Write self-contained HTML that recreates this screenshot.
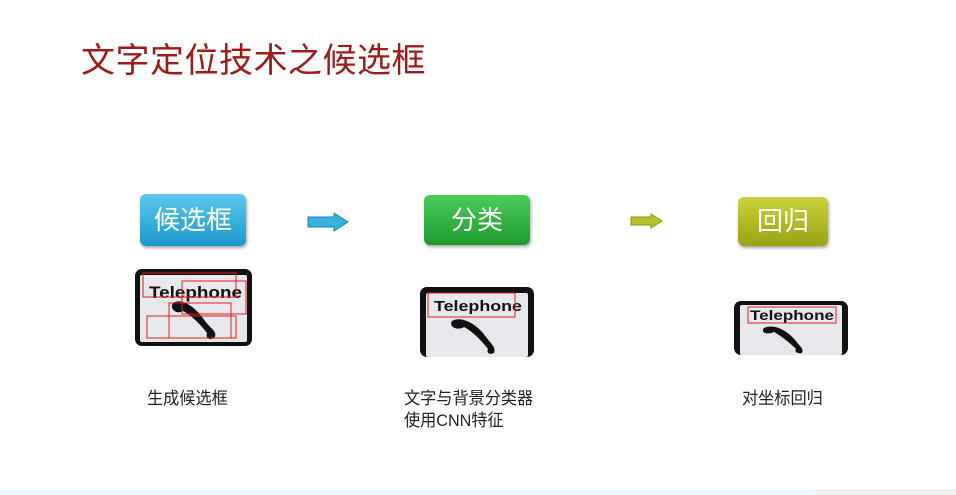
<!DOCTYPE html>
<html><head><meta charset="utf-8"><style>
body{margin:0;width:956px;height:495px;background:#fff;position:relative;overflow:hidden;font-family:"Liberation Sans","Noto Sans CJK SC",sans-serif}
.a{position:absolute}
.t{left:81px;top:33px;font-size:34px;color:#a01a1a;letter-spacing:0.5px;white-space:nowrap}
.btn{position:absolute;border-radius:6px;color:#fff;font-size:26px;text-align:center;box-shadow:1px 2px 3px rgba(0,0,0,.35)}
.lab{position:absolute;font-size:17px;color:#222;line-height:22px;white-space:nowrap;transform:scaleX(0.95);transform-origin:left}
</style></head><body>
<div class="a t">文字定位技术之候选框</div>

<div class="btn" style="left:140px;top:194px;width:106px;height:52px;line-height:52px;background:linear-gradient(#5cc8ec,#1c98cc)">候选框</div>
<div class="btn" style="left:424px;top:195px;width:106px;height:50px;line-height:50px;background:linear-gradient(#4ccd5a,#1e9a2e)">分类</div>
<div class="btn" style="left:738px;top:197px;width:90px;height:49px;line-height:49px;background:linear-gradient(#cbd23a,#9ba214)">回归</div>

<svg class="a" style="left:306px;top:212px" width="44" height="20"><path d="M2 5H28V1L42 10L28 19V15H2Z" fill="#3ab0dc" stroke="#1d86b0"/></svg>
<svg class="a" style="left:629px;top:213px" width="36" height="16"><path d="M2 4H22V1L33 8L22 15V12H2Z" fill="#b9c22c" stroke="#8d9410"/></svg>

<svg class="a" style="left:135px;top:269px" width="117" height="77" viewBox="0 0 117 77">
<rect width="117" height="77" rx="7" fill="#111"/>
<rect x="5" y="6" width="107" height="67" rx="2" fill="#e8e8ec"/>
<text x="14" y="29" font-size="17" font-weight="bold" font-family="Liberation Sans" fill="#111" textLength="93" lengthAdjust="spacingAndGlyphs">Telephone</text>
<path d="M38 34C48 28 62 40 70 52C76 60 82 62 80 68C76 72 70 70 72 64C66 56 56 46 48 42C42 46 34 40 38 34Z" fill="#111"/>
<g fill="none" stroke="#e02020" stroke-width="1"><rect x="8" y="4" width="93" height="24"/><rect x="47" y="12" width="64" height="33"/><rect x="34" y="34" width="62" height="35"/><rect x="12" y="47" width="89" height="22"/></g>
</svg>

<svg class="a" style="left:420px;top:287px" width="114" height="70" viewBox="0 0 114 70">
<rect width="114" height="70" rx="7" fill="#111"/>
<rect x="6" y="6" width="102" height="64" rx="2" fill="#e8e8ec"/>
<text x="14" y="24" font-size="15" font-weight="bold" font-family="Liberation Sans" fill="#111" textLength="88" lengthAdjust="spacingAndGlyphs">Telephone</text>
<path d="M32 34C42 28 58 38 66 50C72 58 76 60 74 66C70 68 66 66 68 62C62 54 52 44 44 40C38 44 28 40 32 34Z" fill="#111"/>
<rect x="8" y="6" width="87" height="24" fill="none" stroke="#e02020"/>
</svg>

<svg class="a" style="left:734px;top:301px" width="114" height="54" viewBox="0 0 114 54">
<rect width="114" height="54" rx="7" fill="#111"/>
<rect x="6" y="4" width="102" height="50" rx="2" fill="#e8e8ec"/>
<text x="16" y="19" font-size="14" font-weight="bold" font-family="Liberation Sans" fill="#111" textLength="84" lengthAdjust="spacingAndGlyphs">Telephone</text>
<path d="M30 27C40 22 54 30 62 40C66 46 70 47 68 52C64 53 60 51 62 48C56 42 46 34 40 31C34 34 26 32 30 27Z" fill="#111"/>
<rect x="14" y="6" width="88" height="16" fill="none" stroke="#e02020"/>
</svg>

<div class="lab" style="left:147px;top:388px">生成候选框</div>
<div class="lab" style="left:404px;top:388px">文字与背景分类器<br>使用CNN特征</div>
<div class="lab" style="left:742px;top:388px">对坐标回归</div>

<div class="a" style="left:0;top:489px;width:815px;height:6px;background:#eef6fb"></div>
<div class="a" style="left:815px;top:489px;width:141px;height:6px;background:#f1f1f1"></div>
</body></html>
